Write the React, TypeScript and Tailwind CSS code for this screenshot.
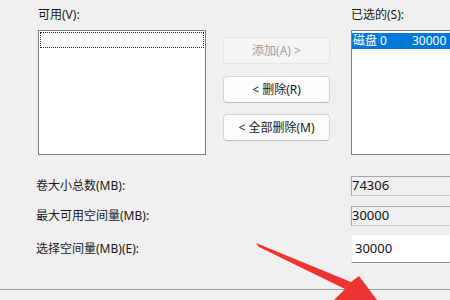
import React from 'react';

function Btn({ label, disabled, className = '' }: { label: string; disabled?: boolean; className?: string }) {
  return (
    <div
      className={`h-[27px] flex items-center justify-center rounded-[4px] border text-[12px] ${
        disabled
          ? 'bg-[#f5f5f5] border-[#e3e3e3] text-[#9d9d9d]'
          : 'bg-[#fdfdfd] border-[#d4d4d4] border-b-[#bdbdbd] text-[#1a1a1a]'
      } ${className}`}
    >
      {label}
    </div>
  );
}

function FieldRow({ label, value, editable, className = '' }: { label: string; value: string; editable?: boolean; className?: string }) {
  return (
    <div className={`flex items-center ${className}`}>
      <div className="w-[315px] flex-none text-[12px] leading-[14px] text-[#1a1a1a]">{label}</div>
      <div
        className={`w-[160px] flex-none flex items-center text-[13px] text-[#111] ${
          editable
            ? 'h-[29px] bg-white border-t border-l border-b border-[#ececec] border-b-[#8a8a8a] pl-[3px]'
            : 'h-[20px] bg-[#f0f0f0] border-t border-l border-b border-[#a8a8a8] border-b-[#c8c8c8]'
        }`}
      >
        {value}
      </div>
    </div>
  );
}

export default function App() {
  return (
    <div className="relative w-[450px] h-[300px] overflow-hidden bg-[#f0f0f0] font-['Noto_Sans','Noto_Sans_CJK_SC',sans-serif]">
      <div className="flex pl-[38px] pt-[8px]">
        <div className="w-[168px] flex-none">
          <div className="h-[22px] text-[12px] leading-[14px] text-[#1a1a1a]">可用(V):</div>
          <div className="h-[125px] bg-white border border-[#7f7f7f] p-[1px]">
            <div className="h-[16px] border border-dotted border-[#222]" />
          </div>
        </div>
        <div className="w-[107px] flex-none ml-[17px] pt-[29px]">
          <Btn label="添加(A) >" disabled />
          <Btn label="< 删除(R)" className="mt-[12px]" />
          <Btn label="< 全部删除(M)" className="mt-[11px]" />
        </div>
        <div className="w-[160px] flex-none ml-[21px]">
          <div className="h-[22px] text-[12px] leading-[14px] text-[#1a1a1a]">已选的(S):</div>
          <div className="h-[125px] bg-white border-t border-l border-b border-[#7f7f7f] pt-[2px]">
            <div className="h-[16px] bg-[#0078d7] text-white text-[12px] leading-[16px] flex">
              <span className="w-[60px] pl-[1px]">磁盘 0</span>
              <span>30000</span>
            </div>
          </div>
        </div>
      </div>

      <div className="flex flex-col pl-[36px]">
        <FieldRow label="卷大小总数(MB):" value="74306" className="mt-[21px]" />
        <FieldRow label="最大可用空间量(MB):" value="30000" className="mt-[10px]" />
        <FieldRow label="选择空间量(MB)(E):" value="30000" editable className="mt-[8px]" />
      </div>
      <div className="mt-[26px] border-t border-[#a0a0a0]" />

      <svg className="absolute left-0 top-0" width="450" height="300" viewBox="0 0 450 300">
        <polygon
          points="256,243 351,282 359,276 386,312 334,300 345,289 259,247"
          fill="#ec3530"
        />
      </svg>
    </div>
  );
}
